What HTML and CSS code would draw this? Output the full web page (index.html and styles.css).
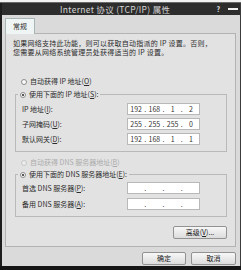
FILE: index.html
```html
<!DOCTYPE html>
<html lang="zh-CN">
<head>
    <meta charset="UTF-8">
    <meta name="viewport" content="width=device-width, initial-scale=1.0">
    <title>Internet 协议 (TCP/IP) 属性</title>
    <link rel="stylesheet" href="styles.css">
</head>
<body>
<div class="desk"></div>
<div class="window">
    <div class="titlebar">
        <span class="title">Internet 协议 (TCP/IP) 属性</span>
        <span class="help">?</span>
        <span class="minimize"></span>
    </div>
    <div class="body">
        <div class="tabs"><span class="tab">常规</span></div>
        <div class="panel">
            <p class="intro">如果网络支持此功能，则可以获取自动指派的 IP 设置。否则，<br>您需要从网络系统管理员处获得适当的 IP 设置。</p>

            <div class="radio-row auto-ip"><span class="radio"></span>自动获得 IP 地址(<u>O</u>)</div>

            <fieldset class="group ip-group">
                <legend><span class="radio checked"></span>使用下面的 IP 地址(<u>S</u>):</legend>
                <div class="field">
                    <label>IP 地址(<u>I</u>):</label>
                    <div class="ip"><span>192</span><i>.</i><span>168</span><i>.</i><span>1</span><i>.</i><span>2</span></div>
                </div>
                <div class="field">
                    <label>子网掩码(<u>U</u>):</label>
                    <div class="ip"><span>255</span><i>.</i><span>255</span><i>.</i><span>255</span><i>.</i><span>0</span></div>
                </div>
                <div class="field">
                    <label>默认网关(<u>D</u>):</label>
                    <div class="ip"><span>192</span><i>.</i><span>168</span><i>.</i><span>1</span><i>.</i><span>1</span></div>
                </div>
            </fieldset>

            <div class="radio-row disabled"><span class="radio"></span>自动获得 DNS 服务器地址(<u>B</u>)</div>

            <fieldset class="group dns-group">
                <legend><span class="radio checked"></span>使用下面的 DNS 服务器地址(<u>E</u>):</legend>
                <div class="field">
                    <label>首选 DNS 服务器(<u>P</u>):</label>
                    <div class="ip"><span></span><i>.</i><span></span><i>.</i><span></span><i>.</i><span></span></div>
                </div>
                <div class="field">
                    <label>备用 DNS 服务器(<u>A</u>):</label>
                    <div class="ip"><span></span><i>.</i><span></span><i>.</i><span></span><i>.</i><span></span></div>
                </div>
            </fieldset>

            <button class="btn advanced">高级(<u>V</u>)...</button>
        </div>
        <div class="footer">
            <button class="btn ok">确定</button>
            <button class="btn cancel">取消</button>
        </div>
    </div>
</div>
</body>
</html>
```

FILE: styles.css
```css
* {
    box-sizing: border-box;
}
html, body {
    margin: 0;
    padding: 0;
}
body {
    width: 241px;
    height: 270px;
    overflow: hidden;
    background: #151515;
    font-family: "Noto Sans CJK SC", "Noto Sans", sans-serif;
    font-size: 7px;
    line-height: 9px;
    color: #2b2b2b;
}
u {
    text-decoration-thickness: 1px;
}
.desk {
    height: 3px;
    background: #f3f3f3;
    border-bottom: 1px solid #6a6a6a;
}
.window {
    height: 263px;
    background: #dadada;
    border-left: 2px solid #1d1d1d;
    border-right: 1px solid #3c3c3c;
    display: flex;
    flex-direction: column;
}
.titlebar {
    height: 12px;
    background: #2d2d2d;
    color: #d6d6d6;
    display: flex;
    align-items: center;
}
.title {
    margin-left: 58px;
    font-size: 8.5px;
    letter-spacing: 0.3px;
}
.help {
    margin-left: auto;
    margin-right: 8px;
    color: #eee;
    font-weight: bold;
}
.minimize {
    width: 10px;
    height: 2px;
    background: #eee;
    margin-right: 2px;
}
.body {
    flex: 1;
    padding: 3px 4px 0 3px;
    display: flex;
    flex-direction: column;
}
.tabs {
    display: flex;
    height: 15px;
}
.tab {
    width: 30px;
    height: 16px;
    padding-top: 3px;
    text-align: center;
    background: #eef5f4;
    border: 1px solid #a9b4b4;
    border-bottom: none;
    position: relative;
    z-index: 1;
}
.panel {
    height: 214px;
    border: 1px solid #b3b3b3;
    background: #e2e2e2;
    padding: 5px 8px 0 6px;
    display: flex;
    flex-direction: column;
}
.intro {
    margin: 0 0 0 1px;
    letter-spacing: 0.25px;
}
.radio-row {
    display: flex;
    align-items: center;
    height: 9px;
    padding-left: 9px;
}
.auto-ip {
    margin-top: 20px;
}
.radio {
    width: 6px;
    height: 6px;
    border-radius: 50%;
    border: 1px solid #8c8c8c;
    background: #fafafa;
    margin-right: 3px;
    display: inline-flex;
    align-items: center;
    justify-content: center;
    flex: none;
}
.radio.checked::after {
    content: "";
    width: 2px;
    height: 2px;
    border-radius: 50%;
    background: #222;
}
.disabled {
    color: #ababab;
    margin-top: 6px;
}
.disabled .radio {
    border-color: #c6c6c6;
    background: #ececec;
}
.group {
    margin: 4px 0 0 3px;
    padding: 4px 0 6px 6px;
    border: 1px solid #b9b9b9;
    min-inline-size: 0;
}
.group legend {
    display: flex;
    align-items: center;
    height: 9px;
    padding: 0 2px;
    margin-left: -4px;
}
.dns-group {
    margin-top: 3px;
    padding-top: 3px;
}
.field {
    display: flex;
    align-items: center;
    height: 12px;
}
.field + .field {
    margin-top: 3px;
}
.dns-group .field + .field {
    margin-top: 4px;
}
.field label {
    width: 105px;
}
.ip {
    width: 73px;
    height: 12px;
    background: #fff;
    border: 1px solid #b8b8b8;
    display: grid;
    grid-template-columns: 1fr 2px 1fr 2px 1fr 2px 1fr;
    align-items: center;
    text-align: center;
    color: #333;
}
.ip i {
    font-style: normal;
}
.btn {
    font-family: inherit;
    font-size: 7px;
    line-height: 9px;
    color: #222;
    height: 13px;
    padding: 0;
    border: 1px solid #929292;
    border-radius: 2px;
    background: linear-gradient(#f7f7f7, #dcdcdc);
}
.advanced {
    width: 54px;
    margin-top: 9px;
    align-self: flex-end;
}
.footer {
    display: flex;
    justify-content: flex-end;
    gap: 5px;
    margin-top: 5px;
}
.ok {
    width: 44px;
}
.cancel {
    width: 45px;
}
```
